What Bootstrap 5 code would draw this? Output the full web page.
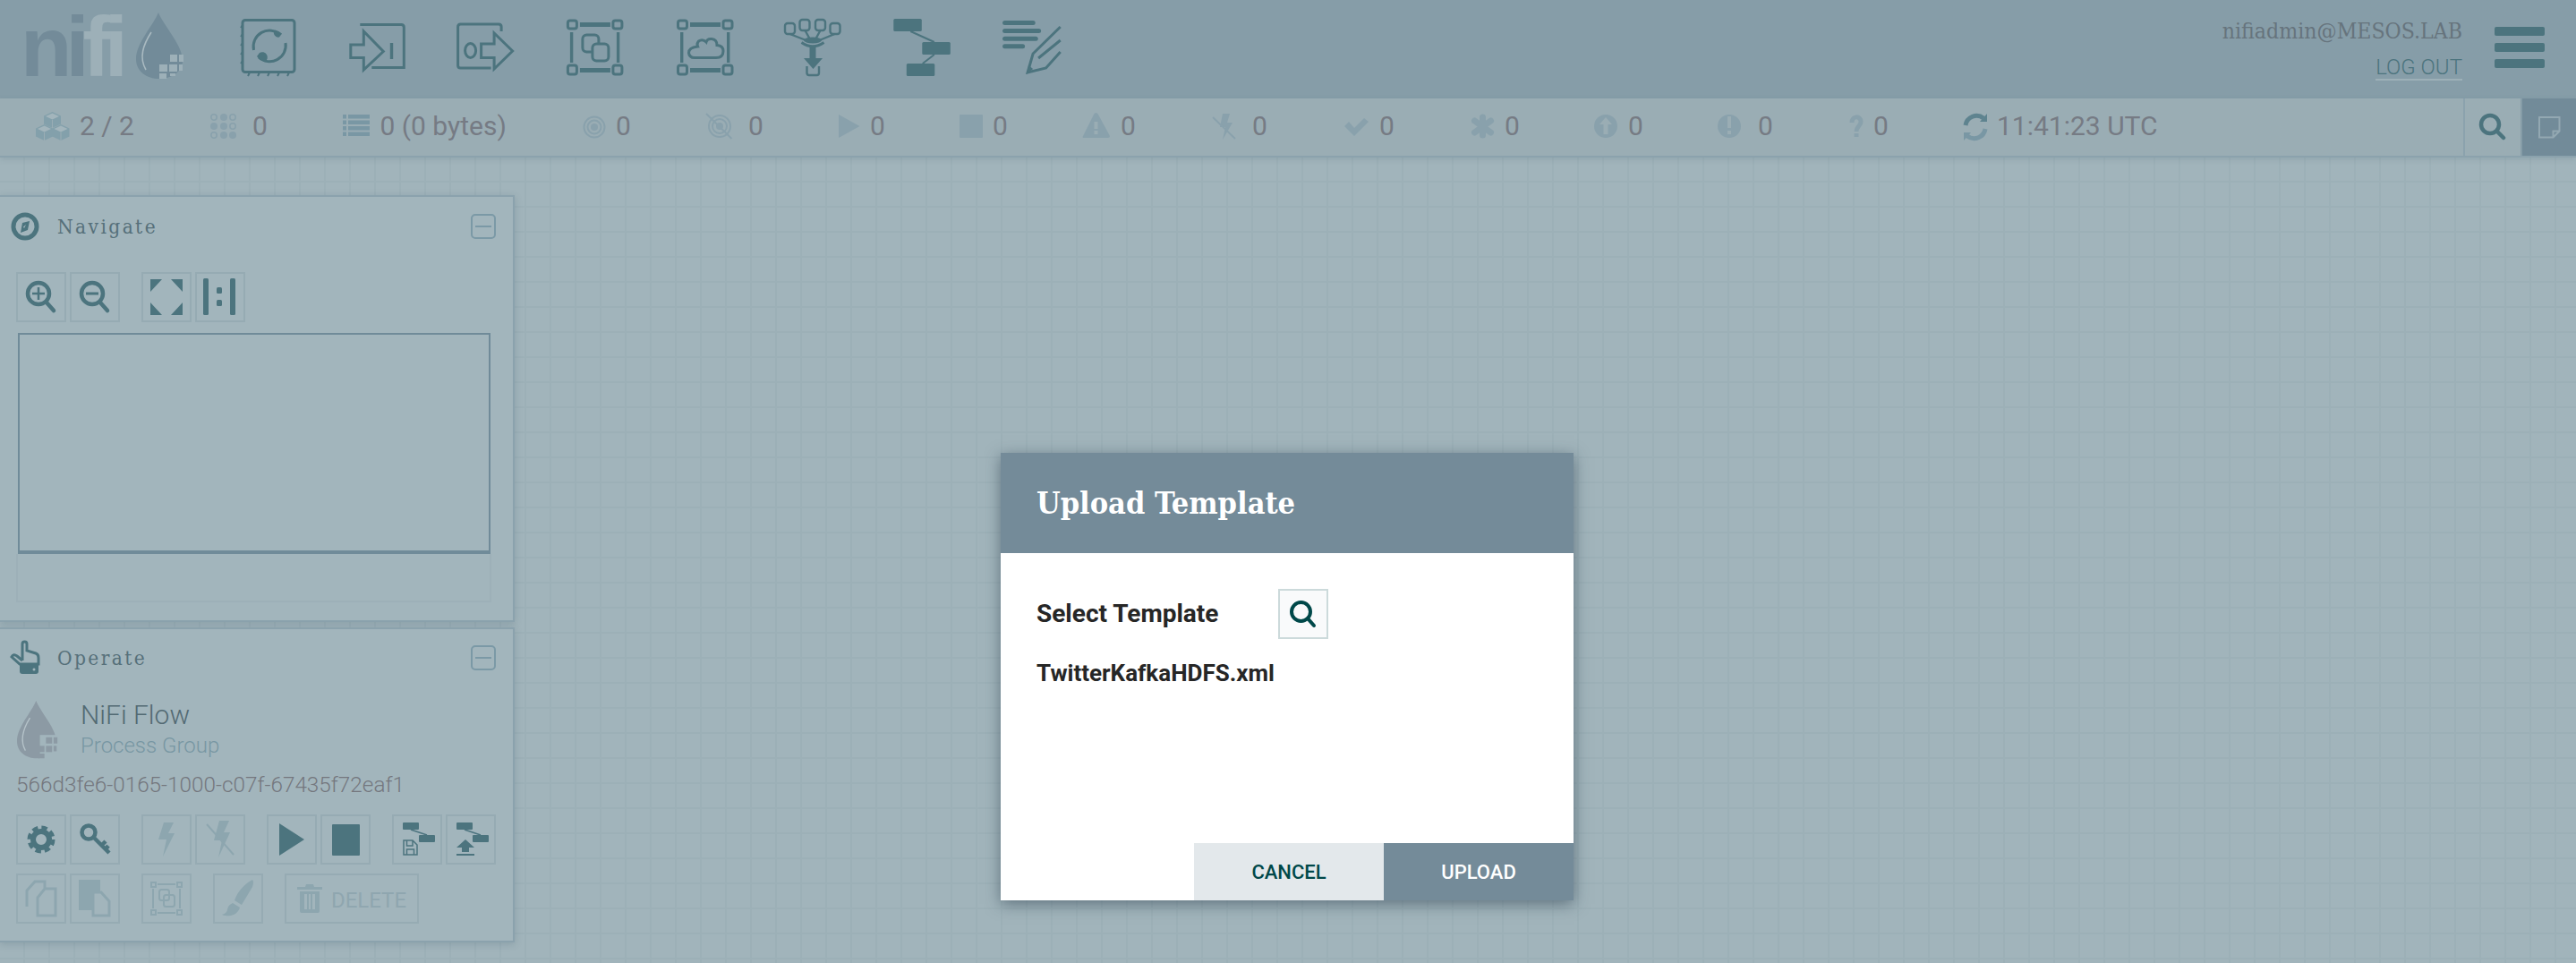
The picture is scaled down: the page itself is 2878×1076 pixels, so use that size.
<!doctype html>
<html lang="en">
<head>
<meta charset="utf-8">
<title>NiFi Flow</title>
<link rel="stylesheet" href="https://cdn.jsdelivr.net/npm/bootstrap@5.3.0/dist/css/bootstrap.min.css">
<style>
html,body{height:100%;margin:0}
body{font-family:Roboto,"Liberation Sans",sans-serif;background:#a1b4bb;overflow:hidden;position:relative}
svg{overflow:visible;display:block;flex:none;stroke-width:3}
.nf-top{height:110px;background:#869da8}
.nf-logo{width:268px;padding-left:23px;height:110px}
.nf-word{font:700 94px/110px "Liberation Sans",sans-serif;letter-spacing:-7px;color:#738b99;width:129px;margin-top:-2px}
.nf-word span{color:#9db0b8}
.nf-dropimg{margin-top:14px}
.nf-tool{width:121.7px;padding-top:18px}
.tb{fill:none;stroke:#4c747e}
.tbf{fill:#4c747e;stroke:none}
.nf-fillbg{fill:#869da8}
.nf-user{padding:18px 0 0;text-align:right;margin-right:36px;font-size:24px}
.nf-name{font-family:"DejaVu Serif",serif;font-stretch:condensed;font-size:24.6px;line-height:34px;color:#66747d}
.nf-out{display:inline-block;margin-top:11px;font-weight:300;line-height:25px;color:#4c747e;border-bottom:2px solid #9db0b8;text-decoration:none}
.nf-burger{width:56px;margin:30px 35px 0 0;gap:8px}
.nf-burger i{display:block;height:10px;border-radius:2px;background:#4c747e}
.nf-status{height:66px;background:#9aadb4;border-bottom:2px solid #8ba2ad;padding-left:40px;font-size:30px;color:#767b84;font-weight:400;position:relative;z-index:1;box-shadow:0 2px 6px rgba(70,100,115,.18)}
.nf-stat{height:64px}
.nf-stat span{margin-top:-3px}
.nf-stat:nth-child(1){width:195px}.nf-stat:nth-child(2){width:148px}.nf-stat:nth-child(3){width:269px}
.nf-stat:nth-child(4){width:137px}.nf-stat:nth-child(5){width:148px}.nf-stat:nth-child(6){width:135px}
.nf-stat:nth-child(7){width:137px}.nf-stat:nth-child(8){width:146px}.nf-stat:nth-child(9){width:146px}
.nf-stat:nth-child(10){width:143px}.nf-stat:nth-child(11){width:137px}.nf-stat:nth-child(12){width:138px}
.nf-stat:nth-child(13){width:146px}.nf-stat:nth-child(14){width:128px}
.si{fill:#89a1ac;stroke:none}
.so{fill:none;stroke:#89a1ac}
.nf-cell{width:64px;height:64px;border-left:2px solid #8ba2ad;display:flex;align-items:center;justify-content:center}
.nf-cell-note{width:62px;background:#728b99;border-left:2px solid #869da8}
.nf-canvas{flex:1;min-height:0;padding-top:42px;background-color:#a1b4bb;
 background-image:linear-gradient(to right,#9cb0b7 2px,transparent 2px),linear-gradient(to bottom,#9cb0b7 2px,transparent 2px);
 background-size:28px 28px;background-position:26px 26px}
.nf-panel{width:575px;background:#a2b5bc;border:2px solid #8ba2ad;border-left:0;box-shadow:0 2px 8px rgba(60,85,100,.22);position:relative}
.nf-panel+.nf-panel{margin-top:6px}
.nf-nav{height:477px}
.nf-op{height:352px}
.nf-head{height:60px;padding:0 0 0 12px;gap:20px}
.nf-nav .nf-head{margin-top:3px}
.nf-op .nf-head{margin-top:2px}
.nf-title{font-family:"DejaVu Serif",serif;font-stretch:condensed;font-size:22.5px;letter-spacing:2.4px;color:#56707a;margin-top:2px}
.nf-min{width:28px;height:28px;border:2px solid #7b99a6;border-radius:5px;margin-left:auto;margin-right:19px;display:flex;align-items:center;justify-content:center;padding:0}
.nf-min i{display:block;width:18px;height:2.5px;background:#7b99a6}
.nf-btns{padding-left:18px;gap:4px}
.nf-navbtns{margin-top:21px}
.nf-row2{margin-top:10px}
.nf-gap{margin-left:20px}
.nf-btn{width:56px;height:56px;padding:0;border:2px solid #96abb3;border-radius:0;background:transparent;display:flex;align-items:center;justify-content:center}
.nf-btn:disabled,.nf-btn.disabled{opacity:1;border-color:#96abb3}
.nf-del,.nf-del:disabled{width:150px;font-size:24px;color:#8fa6af;gap:10px;font-weight:400}
.nf-del span{margin-top:4px}
.nf-eye{width:528px;height:247px;margin:12px 0 0 20px;border:2px solid #708b99;border-bottom-width:4px}
.nf-thumb{width:531px;height:54px;margin-left:18px;border:2px solid #9db0b8;border-top:0}
.a{fill:#4c747e;stroke:none}
.l{fill:#8da6af;stroke:none}
.ls{fill:none;stroke:#8da6af}
.as{fill:none;stroke:#4c747e}
.nf-pg{padding-left:19px;margin-top:18px}
.nf-pgtext{margin:-2px 0 0 25px}
.nf-pgname{font-size:30px;line-height:36px;font-weight:300;color:#536a73}
.nf-pgtype{font-size:24px;line-height:32px;font-weight:300;color:#7897a3}
.nf-pgid{font-size:24.3px;line-height:32px;font-weight:300;color:#74777e;padding-left:18px;margin:12px 0 17px}
.nf-dialog{position:absolute;left:1118px;top:506px;width:640px;height:500px;border:0;border-radius:0;box-shadow:0 4px 16px rgba(40,60,75,.55);background:#fff;z-index:2}
.nf-dh{height:112px;background:#748b99;color:#fff;border:0;border-radius:0!important;padding:0 40px;font-family:"DejaVu Serif",serif;font-stretch:condensed;font-weight:700;font-size:34px;display:flex;align-items:center}
.nf-db{padding:40px 40px 0;flex:1}
.nf-lab{font-size:28px;font-weight:700;color:#262626;width:270px}
.nf-sbtn{width:56px;height:56px;padding:0;border:2px solid #ccdadb;border-radius:0;background:#f9fafb;display:flex;align-items:center;justify-content:center}
.nf-file{font-size:26px;font-weight:700;color:#262626;margin-top:20px;line-height:36px}
.nf-df{height:64px;display:flex;justify-content:flex-end;background:#fff;border:0;padding:0}
.nf-act{width:212px;height:64px;border:0;border-radius:0;font-size:22px;font-weight:500;padding:0;text-transform:uppercase}
.nf-cancel,.nf-cancel:hover{background:#e3e8eb;color:#004849}
.nf-upload,.nf-upload:hover{background:#748b99;color:#fff}
</style>
</head>
<body class="d-flex flex-column">
<svg width="0" height="0" class="position-absolute">
<defs>
<g id="frame">
<g class="tb"><rect x="2.5" y="5" width="10" height="9" rx="2.5"/><rect x="53" y="5" width="10" height="9" rx="2.5"/><rect x="2.5" y="55" width="10" height="10" rx="2.5"/><rect x="53" y="55" width="10" height="10" rx="2.5"/></g>
<rect class="tbf" x="16" y="7" width="34" height="5"/><rect class="tbf" x="16" y="58" width="34" height="5"/>
<rect class="tbf" x="5" y="18" width="3.4" height="34"/><rect class="tbf" x="57" y="18" width="3.4" height="34"/>
</g>
<g id="drop">
<path d="M25 0C31 15 52 36 52 54 52 66 40 74 26 74 12 74 0 66 0 52 0 34 19 15 25 0Z"/>
</g>
<g id="cube">
<path fill="#83a0ab" d="M0 0L9.500 4.500V13.500L0 18-9.500 13.500V4.500Z"/>
<path fill="#a3b5bc" d="M0 1.500L7.500 5 0 8.500-7.500 5Z"/>
<path stroke="#9aadb4" stroke-width="1" d="M0 9V18"/>
</g>
</defs>
</svg>

<header class="nf-top d-flex flex-shrink-0">
 <div class="nf-logo d-flex">
  <div class="nf-word">ni<span>fi</span></div>
  <svg width="54" height="76" viewBox="0 0 54 76" class="nf-dropimg">
   <use href="#drop" fill="#728b99"/>
   <path d="M17 22C8 36 3 50 11 64" fill="none" stroke="#a9bac1" stroke-width="1.6"/>
   <g fill="#9db0b8"><rect x="38" y="47" width="8" height="8"/><rect x="48" y="47" width="5" height="8"/><rect x="26" y="58" width="9" height="8"/><rect x="37" y="58" width="9" height="8"/><rect x="48" y="58" width="4" height="7"/><rect x="26" y="68" width="8" height="6"/><rect x="38" y="68" width="6" height="3"/></g>
  </svg>
 </div>
 <div class="d-flex">
  <div class="nf-tool"><svg width="64" height="70" viewBox="0 0 64 70">
    <rect class="tb" x="3" y="4.5" width="58" height="58" rx="3"/>
    <path class="tb" d="M3 10l-2 3M3 20l-2 3M3 30l-2 3M3 40l-2 3M3 50l-2 3M11 63l-2 4M22 63l-2 4M33 63l-2 4M44 63l-2 4M55 63l-2 4" stroke-width="2"/>
    <path class="tb" d="M15.5 38A18 18 0 0 1 45.500 21"/>
    <path class="tb" d="M51 30A18 18 0 0 1 21 46"/>
    <path class="tbf" d="M39 15.500a18 18 0 0 1 8 4l-3 4a5 5 0 0 1-5-8zM28 51a18 18 0 0 1-9-6l3-4a5 5 0 0 1 6 10z"/>
  </svg></div>
  <div class="nf-tool"><svg width="64" height="70" viewBox="1.7 0 64 70">
    <path class="tb" d="M14 9.500H60q3 0 3 3V57.500H27"/>
    <path class="tb" d="M3.500 32H18V17L40 39.500 18 60V46.500H3.500Z"/>
    <rect class="tbf" x="47.500" y="30" width="3.400" height="18"/>
  </svg></div>
  <div class="nf-tool"><svg width="64" height="70" viewBox="3.400 0 64 70">
    <path class="tb" d="M52.500 17V12q0-3-3-3H7q-3 0-3 3V55q0 3 3 3H41"/>
    <ellipse class="tb" cx="18" cy="38.500" rx="6" ry="8"/>
    <path class="tb" d="M30 31H44.500V19L65 39 44.500 59V46.500H30Z"/>
  </svg></div>
  <div class="nf-tool"><svg width="64" height="70" viewBox="1.100 0 64 70">
    <use href="#frame"/>
    <rect class="tb" x="19" y="21" width="18" height="19" rx="4.500"/>
    <rect class="tb nf-fillbg" x="30" y="31" width="18" height="19" rx="4.500"/>
  </svg></div>
  <div class="nf-tool"><svg width="64" height="70" viewBox="0 0 64 70">
    <use href="#frame"/>
    <path class="tb" d="M21 46.500H45Q53 46.500 53 39 53 33 46 32.500 46 26 40 25.500 35 25 34 29 30 25 25.500 28 23 31 24.500 34 14.500 35 14.500 41 15 46.500 21 46.500Z"/>
  </svg></div>
  <div class="nf-tool"><svg width="64" height="70" viewBox="1.500 0 64 70">
    <g class="tb" stroke-width="2.400"><rect x="2.500" y="8" width="11" height="12" rx="3"/><rect x="19" y="4" width="11" height="12" rx="3"/><rect x="36.500" y="4" width="11" height="12" rx="3"/><rect x="53" y="8" width="11" height="12" rx="3"/>
    <path d="M8 20L26 27M25 16L31 27M42 16L36 27M58 20L41 27"/>
    <path d="M27 56V63.500Q27 66 29.500 66H38Q40.500 66 40.500 63.500V56"/></g>
    <ellipse class="tbf" cx="33.500" cy="27" rx="10" ry="3.500"/>
    <path class="tb" d="M21 29.500Q33.500 38 46 29.500"/>
    <path class="tbf" d="M30 35H37V47H44.500L34 59 23.500 47H30Z"/>
  </svg></div>
  <div class="nf-tool"><svg width="64" height="70" viewBox="1.200 0 64 70">
    <rect class="tbf" x="1.500" y="3" width="31.500" height="14" rx="1.500"/><rect class="tbf" x="33.500" y="29" width="31.500" height="14" rx="1.500"/><rect class="tbf" x="16" y="53" width="31.500" height="14" rx="1.500"/>
    <path class="tb" d="M20.500 17L47 29M47 43L34 53" stroke-width="2"/>
  </svg></div>
  <div class="nf-tool"><svg width="64" height="70" viewBox=".9 0 64 70">
    <rect class="tbf" x="1" y="5" width="36.600" height="5" rx="2.500"/><rect class="tbf" x="1" y="14" width="43" height="5" rx="2.500"/><rect class="tbf" x="1" y="22.700" width="39.600" height="5" rx="2.500"/><rect class="tbf" x="1" y="31.300" width="25" height="5" rx="2.500"/>
    <path class="tb" d="M65.600 12L35 42 29 63 49.500 58 65.600 40M41 47L65.600 27"/>
    <path class="tbf" d="M28 65L30 55 35 59Z"/>
  </svg></div>
 </div>
 <div class="nf-user ms-auto">
  <div class="nf-name">nifiadmin@MESOS.LAB</div>
  <a class="nf-out" href="#">LOG OUT</a>
 </div>
 <div class="nf-burger d-flex flex-column"><i></i><i></i><i></i></div>
</header>

<div class="nf-status d-flex flex-shrink-0">
 <div class="d-flex flex-grow-1">
  <div class="nf-stat d-flex align-items-center"><svg width="49" height="36" viewBox="0 0 49 36"><use href="#cube" x="18.500" y="1"/><use href="#cube" x="9.500" y="15"/><use href="#cube" x="28" y="15"/></svg><span>2 / 2</span></div>
  <div class="nf-stat d-flex align-items-center"><svg width="47" height="36" viewBox="0 0 47 36"><g class="so" stroke-width="1.600"><circle cx="4" cy="7" r="3.200"/><circle cx="25" cy="7" r="3.200"/><circle cx="25" cy="17" r="3.200"/><circle cx="4" cy="27" r="3.200"/></g><g class="si"><circle cx="15" cy="7" r="4"/><circle cx="4" cy="17" r="4"/><circle cx="15" cy="17" r="4"/><circle cx="15" cy="27" r="4"/><circle cx="25" cy="27" r="4"/></g></svg><span>0</span></div>
  <div class="nf-stat d-flex align-items-center"><svg width="41.500" height="36" viewBox="0 0 41.500 36"><g fill="#7997a4"><rect y="4" width="4" height="4.500"/><rect y="10.500" width="4" height="4.500"/><rect y="17" width="4" height="4.500"/><rect y="23.500" width="4" height="4.500"/><rect x="6" y="4" width="24" height="4.500"/><rect x="6" y="10.500" width="24" height="4.500"/><rect x="6" y="17" width="24" height="4.500"/><rect x="6" y="23.500" width="24" height="4.500"/></g></svg><span>0 (0 bytes)</span></div>
  <div class="nf-stat d-flex align-items-center"><svg width="36" height="36" viewBox="0 0 36 36"><g class="so" stroke-width="2"><circle cx="12" cy="18" r="11.500"/><circle cx="12" cy="18" r="7.500"/></g><circle class="si" cx="12" cy="18" r="4"/></svg><span>0</span></div>
  <div class="nf-stat d-flex align-items-center"><svg width="47" height="36" viewBox="0 0 47 36"><g class="so" stroke-width="2"><circle cx="15" cy="17" r="12"/><circle cx="15" cy="17" r="8"/><path d="M0 3L28.500 31"/></g><circle class="si" cx="15" cy="17" r="4"/></svg><span>0</span></div>
  <div class="nf-stat d-flex align-items-center"><svg width="35" height="36" viewBox="0 0 35 36"><path class="si" d="M0 4L23.500 17 0 30Z"/></svg><span>0</span></div>
  <div class="nf-stat d-flex align-items-center"><svg width="37" height="36" viewBox="0 0 37 36"><rect class="si" y="4" width="26" height="26" rx="1"/></svg><span>0</span></div>
  <div class="nf-stat d-flex align-items-center"><svg width="43" height="36" viewBox="0 0 43 36"><path class="si" d="M15.500 2Q17 2 18 4L31 28Q31 30 29 30H2Q0 30 1 28L13 4Q14 2 15.500 2Z"/><rect x="13.500" y="12" width="4" height="8" fill="#9aadb4"/><rect x="13.500" y="22" width="4" height="4" fill="#9aadb4"/></svg><span>0</span></div>
  <div class="nf-stat d-flex align-items-center"><svg width="44" height="36" viewBox="0 0 44 36"><path class="si" d="M11 3H19L16 13H22L11 32 14 18H8Z"/><path class="so" d="M0 7L25 31" stroke-width="1.800"/></svg><span>0</span></div>
  <div class="nf-stat d-flex align-items-center"><svg width="40" height="36" viewBox="0 0 40 36"><path class="si" d="M1 17L6 12 12 19 23 8 28 12 12 28Z"/></svg><span>0</span></div>
  <div class="nf-stat d-flex align-items-center"><svg width="37" height="36" viewBox="0 0 37 36"><g class="so" stroke-width="7" stroke-linecap="round"><path d="M12.500 7V27M3.500 11L21.500 24M21.500 11L3.500 24"/></g></svg><span>0</span></div>
  <div class="nf-stat d-flex align-items-center"><svg width="38" height="36" viewBox="0 0 38 36"><ellipse class="si" cx="13" cy="17" rx="13" ry="13"/><path fill="#9aadb4" d="M13 7L20 15H15.500V26H10.500V15H6Z"/></svg><span>0</span></div>
  <div class="nf-stat d-flex align-items-center"><svg width="45" height="36" viewBox="0 0 45 36"><circle class="si" cx="13" cy="17" r="13"/><rect x="11" y="6" width="4" height="13" fill="#9aadb4"/><rect x="11" y="22" width="4" height="4" fill="#9aadb4"/></svg><span>0</span></div>
  <div class="nf-stat d-flex align-items-center"><svg width="28" height="36" viewBox="0 0 28 36"><path class="so" stroke-width="5" d="M4 13C4 5 14 5 14 12 14 17 9 17 9 23"/><rect class="si" x="6.500" y="25" width="5" height="4"/></svg><span>0</span></div>
  <div class="nf-stat d-flex align-items-center"><svg width="38" height="36" viewBox="0 0 38 36"><path d="M3 16A12.500 12.500 0 0 1 23 8" fill="none" stroke="#5e838f" stroke-width="5"/><path d="M25 20A12.500 12.500 0 0 1 5 28" fill="none" stroke="#7997a4" stroke-width="5"/><path d="M19 12H27V3Z" fill="#5e838f"/><path d="M9 24H1V33Z" fill="#7997a4"/></svg><span>11:41:23 UTC</span></div>
 </div>
 <div class="nf-cell"><svg width="30" height="30" viewBox="0 0 30 30"><circle cx="12" cy="12" r="10" class="tb" stroke-width="4.500"/><path class="tb" stroke-width="4.500" stroke-linecap="round" d="M20 20L27 27"/></svg></div>
 <div class="nf-cell nf-cell-note"><svg width="26" height="26" viewBox="0 0 26 26"><path d="M2 2H24.500V17.500L17.500 24.500H2Z M24.500 17.500H17.500V24.500" fill="none" stroke="#93a8b2" stroke-width="2"/></svg></div>
</div>

<main class="nf-canvas">
 <section class="nf-panel nf-nav">
  <div class="nf-head d-flex align-items-center">
   <svg width="32" height="32" viewBox="0 0 32 32"><circle class="as" cx="16" cy="16" r="13" stroke-width="5"/><path class="a" d="M21 10L19 20 11 23 13 12Z"/><path d="M17 14L15 18 14 16.500Z" fill="#a2b5bc"/></svg>
   <span class="nf-title">Navigate</span>
   <button type="button" class="btn nf-min" aria-label="Collapse"><i></i></button>
  </div>
  <div class="nf-btns nf-navbtns d-flex">
   <button type="button" class="btn nf-btn" aria-label="Zoom in"><svg width="36" height="38" viewBox="0 0 36 38"><circle class="as" cx="15" cy="15" r="12" stroke-width="4.500"/><path class="as" stroke-width="4.500" stroke-linecap="round" d="M24 25L32 34"/><path class="as" stroke-width="2.500" d="M15 8V22M8 15H22"/></svg></button>
   <button type="button" class="btn nf-btn" aria-label="Zoom out"><svg width="36" height="38" viewBox="0 0 36 38"><circle class="as" cx="15" cy="15" r="12" stroke-width="4.500"/><path class="as" stroke-width="4.500" stroke-linecap="round" d="M24 25L32 34"/><path class="as" stroke-width="3" d="M8 15H22"/></svg></button>
   <button type="button" class="btn nf-btn nf-gap" aria-label="Fit"><svg width="38" height="42" viewBox="0 0 38 42"><path class="a" d="M1 1H14L1 15ZM37 1H24L37 15ZM1 41V27L14 41ZM37 41V27L24 41Z"/></svg></button>
   <button type="button" class="btn nf-btn" aria-label="Actual size"><svg width="38" height="42" viewBox="0 0 38 42"><rect class="a" x="0" y="0" width="6" height="41" rx="1.500"/><rect class="a" x="30" y="0" width="6" height="41" rx="1.500"/><rect class="a" x="15" y="10" width="6" height="7" rx="1.500"/><rect class="a" x="15" y="24" width="6" height="7" rx="1.500"/></svg></button>
  </div>
  <div class="nf-eye"></div>
  <div class="nf-thumb"></div>
 </section>
 <section class="nf-panel nf-op">
  <div class="nf-head d-flex align-items-center">
   <svg width="32" height="38" viewBox="0 0 32 38"><path class="tb" stroke-width="3" d="M13 22V3.500Q13 1 15.500 1 18 1 18 3.500V11L28 14Q31 15 31 19V26H10L1 18Q3 14 7 17L13 22"/><path class="a" d="M10 26H31V34Q31 37 28 37H13Q10 37 10 34Z"/><circle cx="26" cy="32" r="1.500" fill="#a2b5bc"/></svg>
   <span class="nf-title">Operate</span>
   <button type="button" class="btn nf-min" aria-label="Collapse"><i></i></button>
  </div>
  <div class="nf-pg d-flex align-items-start">
   <svg width="46" height="66" viewBox="0 0 54 76" preserveAspectRatio="none"><use href="#drop" fill="#8c9aa4"/><path d="M17 22C8 36 3 50 11 64" fill="none" stroke="#b5c3c9" stroke-width="1.600"/><g fill="#a2b5bc"><rect x="30" y="44" width="24" height="32"/></g><g fill="#8c9aa4"><rect x="38" y="47" width="8" height="8"/><rect x="48" y="47" width="5" height="8"/><rect x="28" y="58" width="8" height="8"/><rect x="38" y="58" width="8" height="8"/><rect x="48" y="58" width="4" height="7"/><rect x="28" y="68" width="8" height="6"/></g></svg>
   <div class="nf-pgtext">
    <div class="nf-pgname">NiFi Flow</div>
    <div class="nf-pgtype">Process Group</div>
   </div>
  </div>
  <div class="nf-pgid">566d3fe6-0165-1000-c07f-67435f72eaf1</div>
  <div class="nf-btns d-flex">
   <button type="button" class="btn nf-btn" aria-label="Configure"><svg width="32" height="32" viewBox="0 0 32 32"><circle class="as" cx="16" cy="16" r="9" stroke-width="6"/><circle cx="16" cy="16" r="13.500" fill="none" stroke="#4c747e" stroke-width="4" stroke-dasharray="6.500 4.100"/></svg></button>
   <button type="button" class="btn nf-btn" aria-label="Access"><svg width="34" height="36" viewBox="0 0 34 36"><circle class="as" cx="10" cy="10" r="7.500" stroke-width="4.500"/><path class="as" stroke-width="4.500" d="M15 15L33 33M24 25L29 20M28 30L32 25"/></svg></button>
   <button type="button" class="btn nf-btn nf-gap" disabled aria-label="Enable"><svg width="20" height="38" viewBox="0 0 20 38"><path class="l" d="M7 0H18L12 12H19L6 38 10 19H1Z"/></svg></button>
   <button type="button" class="btn nf-btn" disabled aria-label="Disable"><svg width="34" height="42" viewBox="0 0 34 42"><path class="l" d="M16 0H27L21 13H28L15 41 19 22H10Z"/><path class="ls" stroke-width="2" d="M2 4L32 38"/></svg></button>
   <button type="button" class="btn nf-btn nf-gap" aria-label="Start"><svg width="30" height="36" viewBox="0 0 30 36"><path class="a" d="M1 0L29 18 1 36Z"/></svg></button>
   <button type="button" class="btn nf-btn" aria-label="Stop"><svg width="31" height="35" viewBox="0 0 31 35"><rect class="a" width="31" height="35" rx="1"/></svg></button>
   <button type="button" class="btn nf-btn nf-gap" aria-label="Create template"><svg width="36" height="42" viewBox="-2 -2 36 42"><rect class="a" x="0" y="0" width="18" height="8" rx="1"/><rect class="a" x="18" y="14" width="18" height="8" rx="1"/><path class="as" stroke-width="1.500" d="M9 8L27 14"/><path class="as" stroke-width="1.500" d="M1 20H11L16 25V36H1ZM4.500 20V26H11V20M4.500 36V30H12.500V36"/></svg></button>
   <button type="button" class="btn nf-btn" aria-label="Upload template"><svg width="36" height="42" viewBox="-2 -2 36 42"><rect class="a" x="0" y="0" width="18" height="8" rx="1"/><rect class="a" x="18" y="14" width="18" height="8" rx="1"/><path class="as" stroke-width="1.500" d="M9 8L27 14"/><path class="a" d="M10 19L20 28H14V33H6V28H0ZM0 35H20V37H0Z"/></svg></button>
  </div>
  <div class="nf-btns nf-row2 d-flex">
   <button type="button" class="btn nf-btn" disabled aria-label="Copy"><svg width="36" height="42" viewBox="0 0 36 42"><path class="ls" d="M2 30V12L11 2H22V10M14 40V20L22 10H34V40Z"/></svg></button>
   <button type="button" class="btn nf-btn" disabled aria-label="Paste"><svg width="36" height="42" viewBox="0 0 36 42"><path class="l" d="M0 0H24V13H15V34H0Z"/><path class="ls" d="M16 14H25L34 24V40H16Z"/></svg></button>
   <button type="button" class="btn nf-btn nf-gap" disabled aria-label="Group"><svg width="36" height="38" viewBox="0 0 36 38"><g class="ls" stroke-width="2"><rect x="1" y="1" width="5" height="5"/><rect x="30" y="1" width="5" height="5"/><rect x="1" y="32" width="5" height="5"/><rect x="30" y="32" width="5" height="5"/><path d="M8 3H28M8 35H28M3 8V30M33 8V30"/><rect x="10" y="9" width="11" height="12" rx="2.500"/><rect x="15" y="15" width="12" height="13" rx="2.500"/></g></svg></button>
   <button type="button" class="btn nf-btn nf-gap" disabled aria-label="Color"><svg width="36" height="42" viewBox="0 0 36 42"><path class="l" d="M34 0Q36 2 34 8L22 28 14 23C18 12 26 4 34 0ZM12 26L20 31Q18 38 10 40 4 41 0 39 6 37 6 33 7 28 12 26Z"/></svg></button>
   <button type="button" class="btn nf-btn nf-gap nf-del" disabled><svg width="28" height="32" viewBox="0 0 28 32"><path class="l" d="M10 0H18L19 3H28V6H0V3H9ZM3 8H25V30Q25 32 23 32H5Q3 32 3 30ZM8 11V28H11V11ZM13 11V28H15V11ZM17 11V28H20V11Z" fill-rule="evenodd"/></svg><span>DELETE</span></button>
  </div>
 </section>
</main>

<div class="card nf-dialog">
 <div class="card-header nf-dh">Upload Template</div>
 <div class="card-body nf-db">
  <div class="d-flex align-items-center">
   <div class="nf-lab">Select Template</div>
   <button type="button" class="btn nf-sbtn" aria-label="Select"><svg width="30" height="30" viewBox="0 0 30 30"><circle cx="12.500" cy="12.500" r="10.500" fill="none" stroke="#004849" stroke-width="4"/><path d="M20 20L27 28" fill="none" stroke="#004849" stroke-width="4" stroke-linecap="round"/></svg></button>
  </div>
  <div class="nf-file">TwitterKafkaHDFS.xml</div>
 </div>
 <div class="card-footer nf-df">
  <button type="button" class="btn nf-act nf-cancel">Cancel</button>
  <button type="button" class="btn nf-act nf-upload">Upload</button>
 </div>
</div>
<script src="https://cdn.jsdelivr.net/npm/bootstrap@5.3.0/dist/js/bootstrap.bundle.min.js"></script>
</body>
</html>
